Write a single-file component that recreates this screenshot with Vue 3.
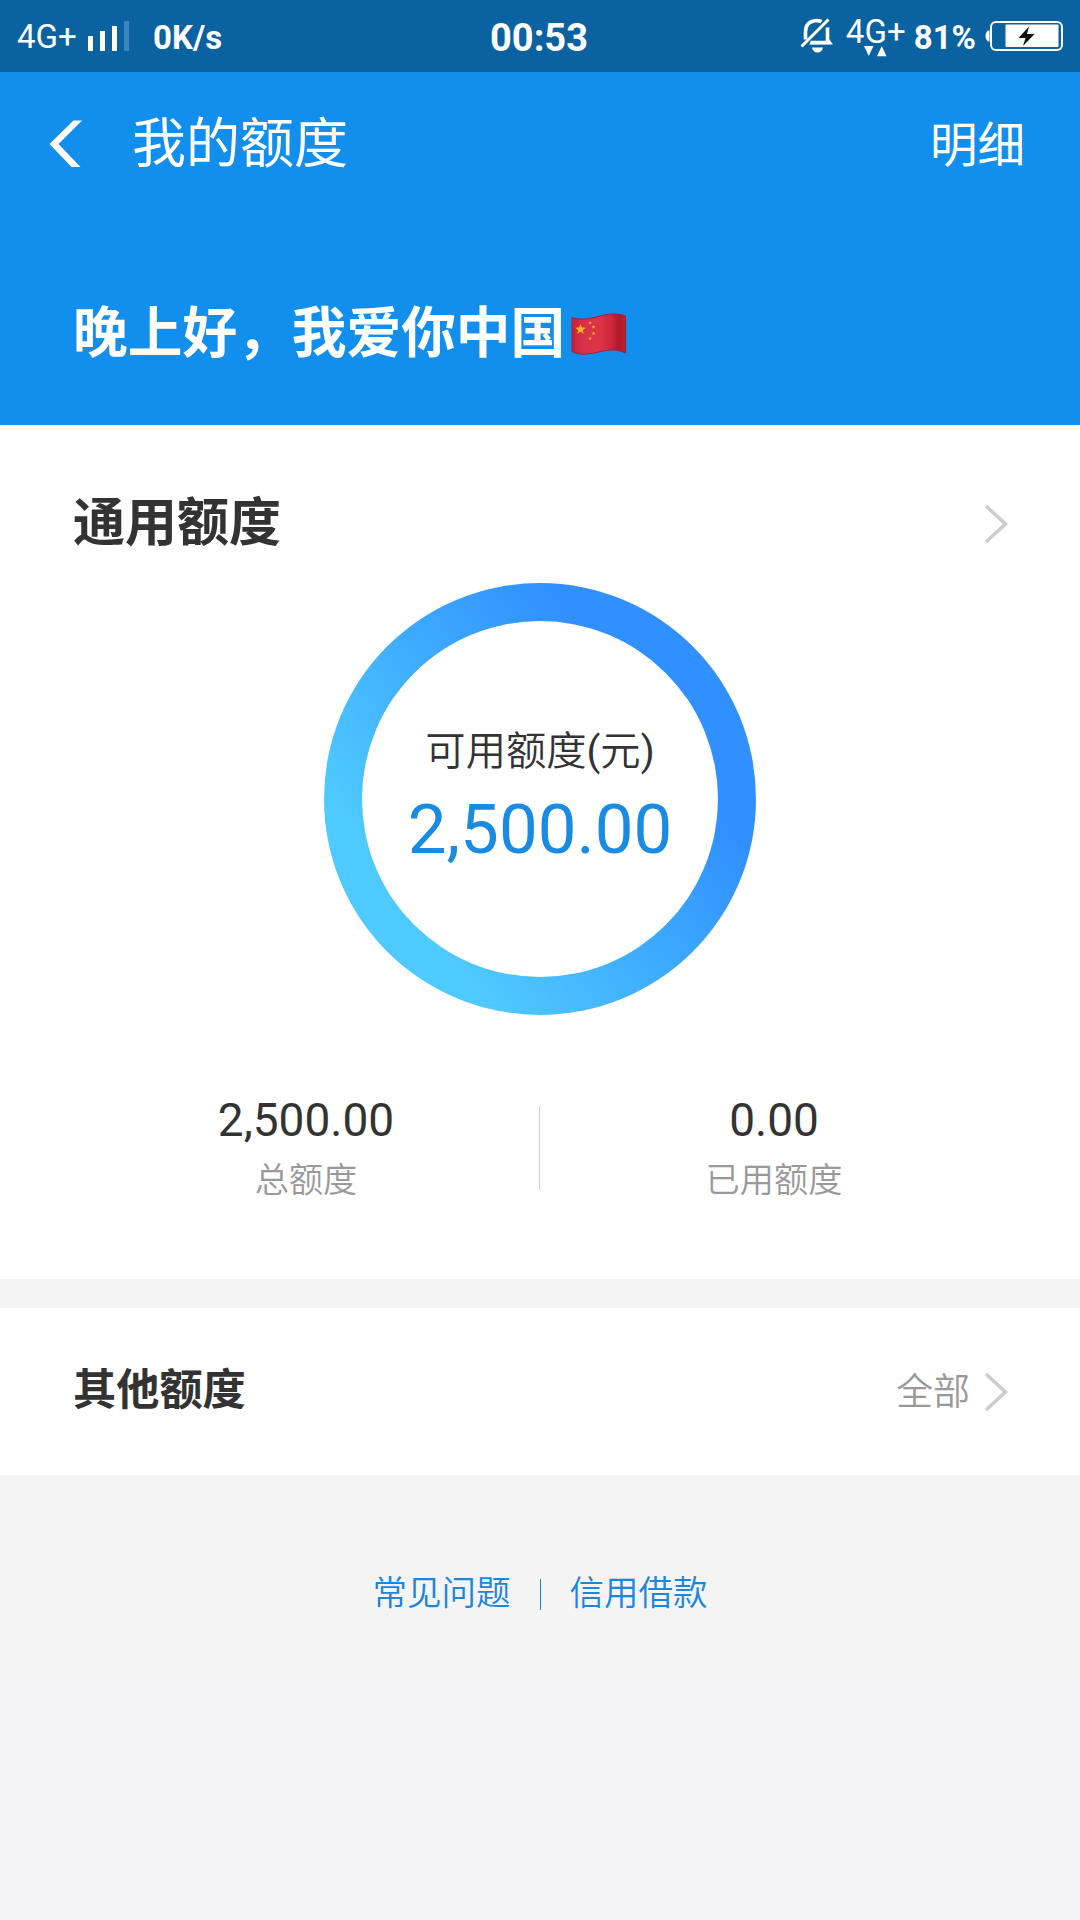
<template>
  <div class="page">
    <div class="status">
      <span class="net">4G+</span>
      <svg class="bars" width="42" height="32" viewBox="0 0 42 32">
        <rect x="0" y="16" width="5" height="15" fill="#fff" />
        <rect x="12" y="11" width="5" height="20" fill="#fff" />
        <rect x="24" y="6" width="5" height="25" fill="#fff" />
        <rect x="36" y="1" width="5" height="30" fill="#3d84bc" />
      </svg>
      <span class="speed">0K/s</span>
      <span class="clock">00:53</span>
      <div class="status-right">
        <svg class="bell" width="34" height="36" viewBox="0 0 34 36">
          <path d="M5.500 21.500V14C5.500 7 9 3.400 15 2.700c3-.3 4.500 0 6.500 1" fill="none" stroke="#fff" stroke-width="3.600" />
          <path d="M27.500 9.500V24.500H10.500" fill="none" stroke="#fff" stroke-width="3.600" />
          <path d="M27 18l6 8.500H9l3-3.500h15z" fill="#fff" />
          <path d="M1.500 28.500L28.500 1.500" fill="none" stroke="#fff" stroke-width="3" />
          <path d="M12 29.500h11c-.8 3.200-2.600 5-5.500 5s-4.700-1.800-5.500-5z" fill="#fff" />
        </svg>
        <div class="net-data">
          <span>4G+</span>
          <svg width="24" height="11" viewBox="0 0 24 11">
            <path d="M0 0h9.500L4.750 10z M13 10.300h9.500L17.750 0z" fill="#fff" />
          </svg>
        </div>
        <span class="percent">81%</span>
        <svg class="battery" width="78" height="32" viewBox="0 0 78 32">
          <path d="M4.500 10.500v11H3C1.500 20 .5 18.500.5 16s1-4.500 2.500-5.500z" fill="#fff" />
          <rect x="6" y="2" width="71" height="28" rx="5" fill="none" stroke="#fff" stroke-width="2" />
          <rect x="20.500" y="4.500" width="53" height="22.500" rx="1" fill="#fff" />
          <path d="M44 6.500L33.500 18h7L38 26l11.500-12h-7.500z" fill="#111" />
        </svg>
      </div>
    </div>

    <div class="nav">
      <svg class="back" width="34" height="48" viewBox="0 0 34 48">
        <path d="M33 .5H24.500L.5 24 22.500 47H31.500L9.500 24z" fill="#fff" />
      </svg>
      <span class="title">我的额度</span>
      <span class="detail">明细</span>
    </div>

    <div class="greeting">
      <span>晚上好，我爱你中国</span>
      <svg class="flag" width="56" height="42" viewBox="0 0 56 42">
        <defs>
          <linearGradient id="cloth" x1="0" y1="0" x2="1" y2="0">
            <stop offset="0" stop-color="#c32237" />
            <stop offset=".2" stop-color="#d9304a" />
            <stop offset=".52" stop-color="#dc3548" />
            <stop offset=".74" stop-color="#cf2638" />
            <stop offset=".88" stop-color="#ae1a2c" />
            <stop offset="1" stop-color="#c22131" />
          </linearGradient>
        </defs>
        <path d="M1 4.500C8 7 16 6.500 27 3.500S46 0 54.500 3V40C48 36.500 40 36 30 38.500S8 43 1 38.500z" fill="url(#cloth)" stroke="#a11f38" stroke-width="1" />
        <path v-for="(s, i) in stars" :key="i" :d="star(s)" fill="#f8b51c" />
      </svg>
    </div>

    <div class="card">
      <div class="card-head">
        <span class="card-title">通用额度</span>
        <svg class="arrow" width="24" height="40" viewBox="0 0 24 40"><path d="M2 2l19.500 18L2 38" fill="none" stroke="#ccc" stroke-width="3.500" /></svg>
      </div>
      <div class="ring">
        <div class="ring-inner">
          <span class="ring-label">可用额度<i>(</i>元<i>)</i></span>
          <span class="ring-value">2,500.00</span>
        </div>
      </div>
      <div class="stats">
        <div v-for="s in stats" :key="s.label" class="stat">
          <span class="stat-value">{{ s.value }}</span>
          <span class="stat-label">{{ s.label }}</span>
        </div>
      </div>
    </div>

    <div class="other">
      <span class="other-title">其他额度</span>
      <span class="all">全部</span>
      <svg class="arrow" width="24" height="40" viewBox="0 0 24 40"><path d="M2 2l19.500 18L2 38" fill="none" stroke="#ccc" stroke-width="3.500" /></svg>
    </div>

    <div class="links">
      <a>常见问题</a>
      <i class="sep"></i>
      <a>信用借款</a>
    </div>
  </div>
</template>

<script setup>
const stats = [
  { value: '2,500.00', label: '总额度' },
  { value: '0.00', label: '已用额度' }
]

// x, y, radius
const stars = [
  [9.5, 16.5, 5.6],
  [19, 10, 2],
  [22.5, 14, 2],
  [22.5, 20.5, 2],
  [19, 25.5, 2]
]

function star([cx, cy, r]) {
  const pts = []
  for (let i = 0; i < 10; i++) {
    const a = (i * Math.PI) / 5 - Math.PI / 2
    const d = i % 2 ? r * 0.42 : r
    pts.push((cx + d * Math.cos(a)).toFixed(2) + ' ' + (cy + d * Math.sin(a)).toFixed(2))
  }
  return 'M' + pts.join('L') + 'z'
}
</script>

<style>
body { margin:0; background:#f3f3f8; }
</style>

<style scoped>
.page { width:1080px; height:1920px; overflow:hidden; background:#f3f3f8; font-family:Roboto, "Noto Sans CJK SC", sans-serif; color:#333; }
.page span, .page a { white-space:nowrap; }
.page svg { display:block; flex:none; }

.status { position:relative; display:flex; align-items:center; box-sizing:border-box; height:72px; padding:0 17px; background:#0b62a1; color:#fff; }
.net { width:71px; font-size:33px; line-height:40px; padding-top:1px; }
.speed { margin-left:23px; font-size:33px; font-weight:700; line-height:40px; padding-top:3px; }
.clock { position:absolute; left:0; right:2px; top:17px; text-align:center; font-size:38px; font-weight:700; line-height:42px; }
.status-right { display:flex; align-items:center; margin-left:auto; }
.net-data { display:flex; flex-direction:column; align-items:center; width:60px; height:42px; margin:5px 8px 0 12px; font-size:33px; line-height:28px; }
.percent { font-size:33px; font-weight:700; line-height:40px; padding-top:3px; margin-right:9px; }

.nav { display:flex; align-items:center; box-sizing:border-box; height:142px; padding:2px 55px 0 49px; background:#128eec; color:#fff; }
.title { margin-left:49px; font-size:54px; line-height:60px; padding-top:1px; }
.detail { margin-left:auto; font-size:47.500px; line-height:60px; padding-top:4px; }

.greeting { display:flex; align-items:center; box-sizing:border-box; height:211px; padding:27px 0 0 73px; background:#128eec; color:#fff; font-size:54.700px; font-weight:700; }
.greeting span { line-height:100px; }
.flag { margin:1px 0 0 6px; }

.card { box-sizing:border-box; height:854px; background:#fff; }
.card-head { display:flex; align-items:center; justify-content:space-between; height:158px; padding:40px 72px 0 73px; box-sizing:border-box; }
.card-title { font-size:52px; font-weight:700; line-height:60px; }
.ring { display:flex; width:432px; height:432px; margin:0 auto; border-radius:50%; background:linear-gradient(53deg, #4fcaff 22%, #3090ff 72%); }
.ring-inner { display:flex; flex-direction:column; align-items:center; box-sizing:border-box; width:356px; height:356px; margin:38px; padding-top:104px; border-radius:50%; background:#fff; }
.ring-label { font-size:40.300px; font-weight:350; line-height:54px; }
.ring-label i { font-style:normal; font-weight:400; }
.ring-value { margin-top:15px; font-size:69px; line-height:72px; color:#1a8be3; }
.stats { display:flex; margin:82px 72px 0; }
.stat { display:flex; flex:1; flex-direction:column; align-items:center; height:98px; }
.stat + .stat { position:relative; }
.stat + .stat::before { content:""; position:absolute; left:-1px; top:9px; width:1px; height:84px; background:#ccc; }
.stat-value { font-size:46px; line-height:46px; }
.stat-label { margin-top:13px; font-size:34.200px; font-weight:350; line-height:48px; color:#999; }

.other { display:flex; align-items:center; box-sizing:border-box; height:196px; padding:0 72px 0 73px; border-top:29px solid #f4f4f4; background:#fff; }
.other-title { font-size:43.200px; font-weight:700; line-height:60px; padding-bottom:2px; }
.all { margin:2px 14px 0 auto; font-size:37px; font-weight:350; line-height:50px; color:#999; }

.links { display:flex; justify-content:center; box-sizing:border-box; height:205px; padding-top:93px; background:#f4f4f4; font-size:34.500px; font-weight:350; line-height:50px; color:#1a86dc; }
.sep { width:1px; height:31px; margin:11px 29px 0; background:#1a86dc; }
</style>
